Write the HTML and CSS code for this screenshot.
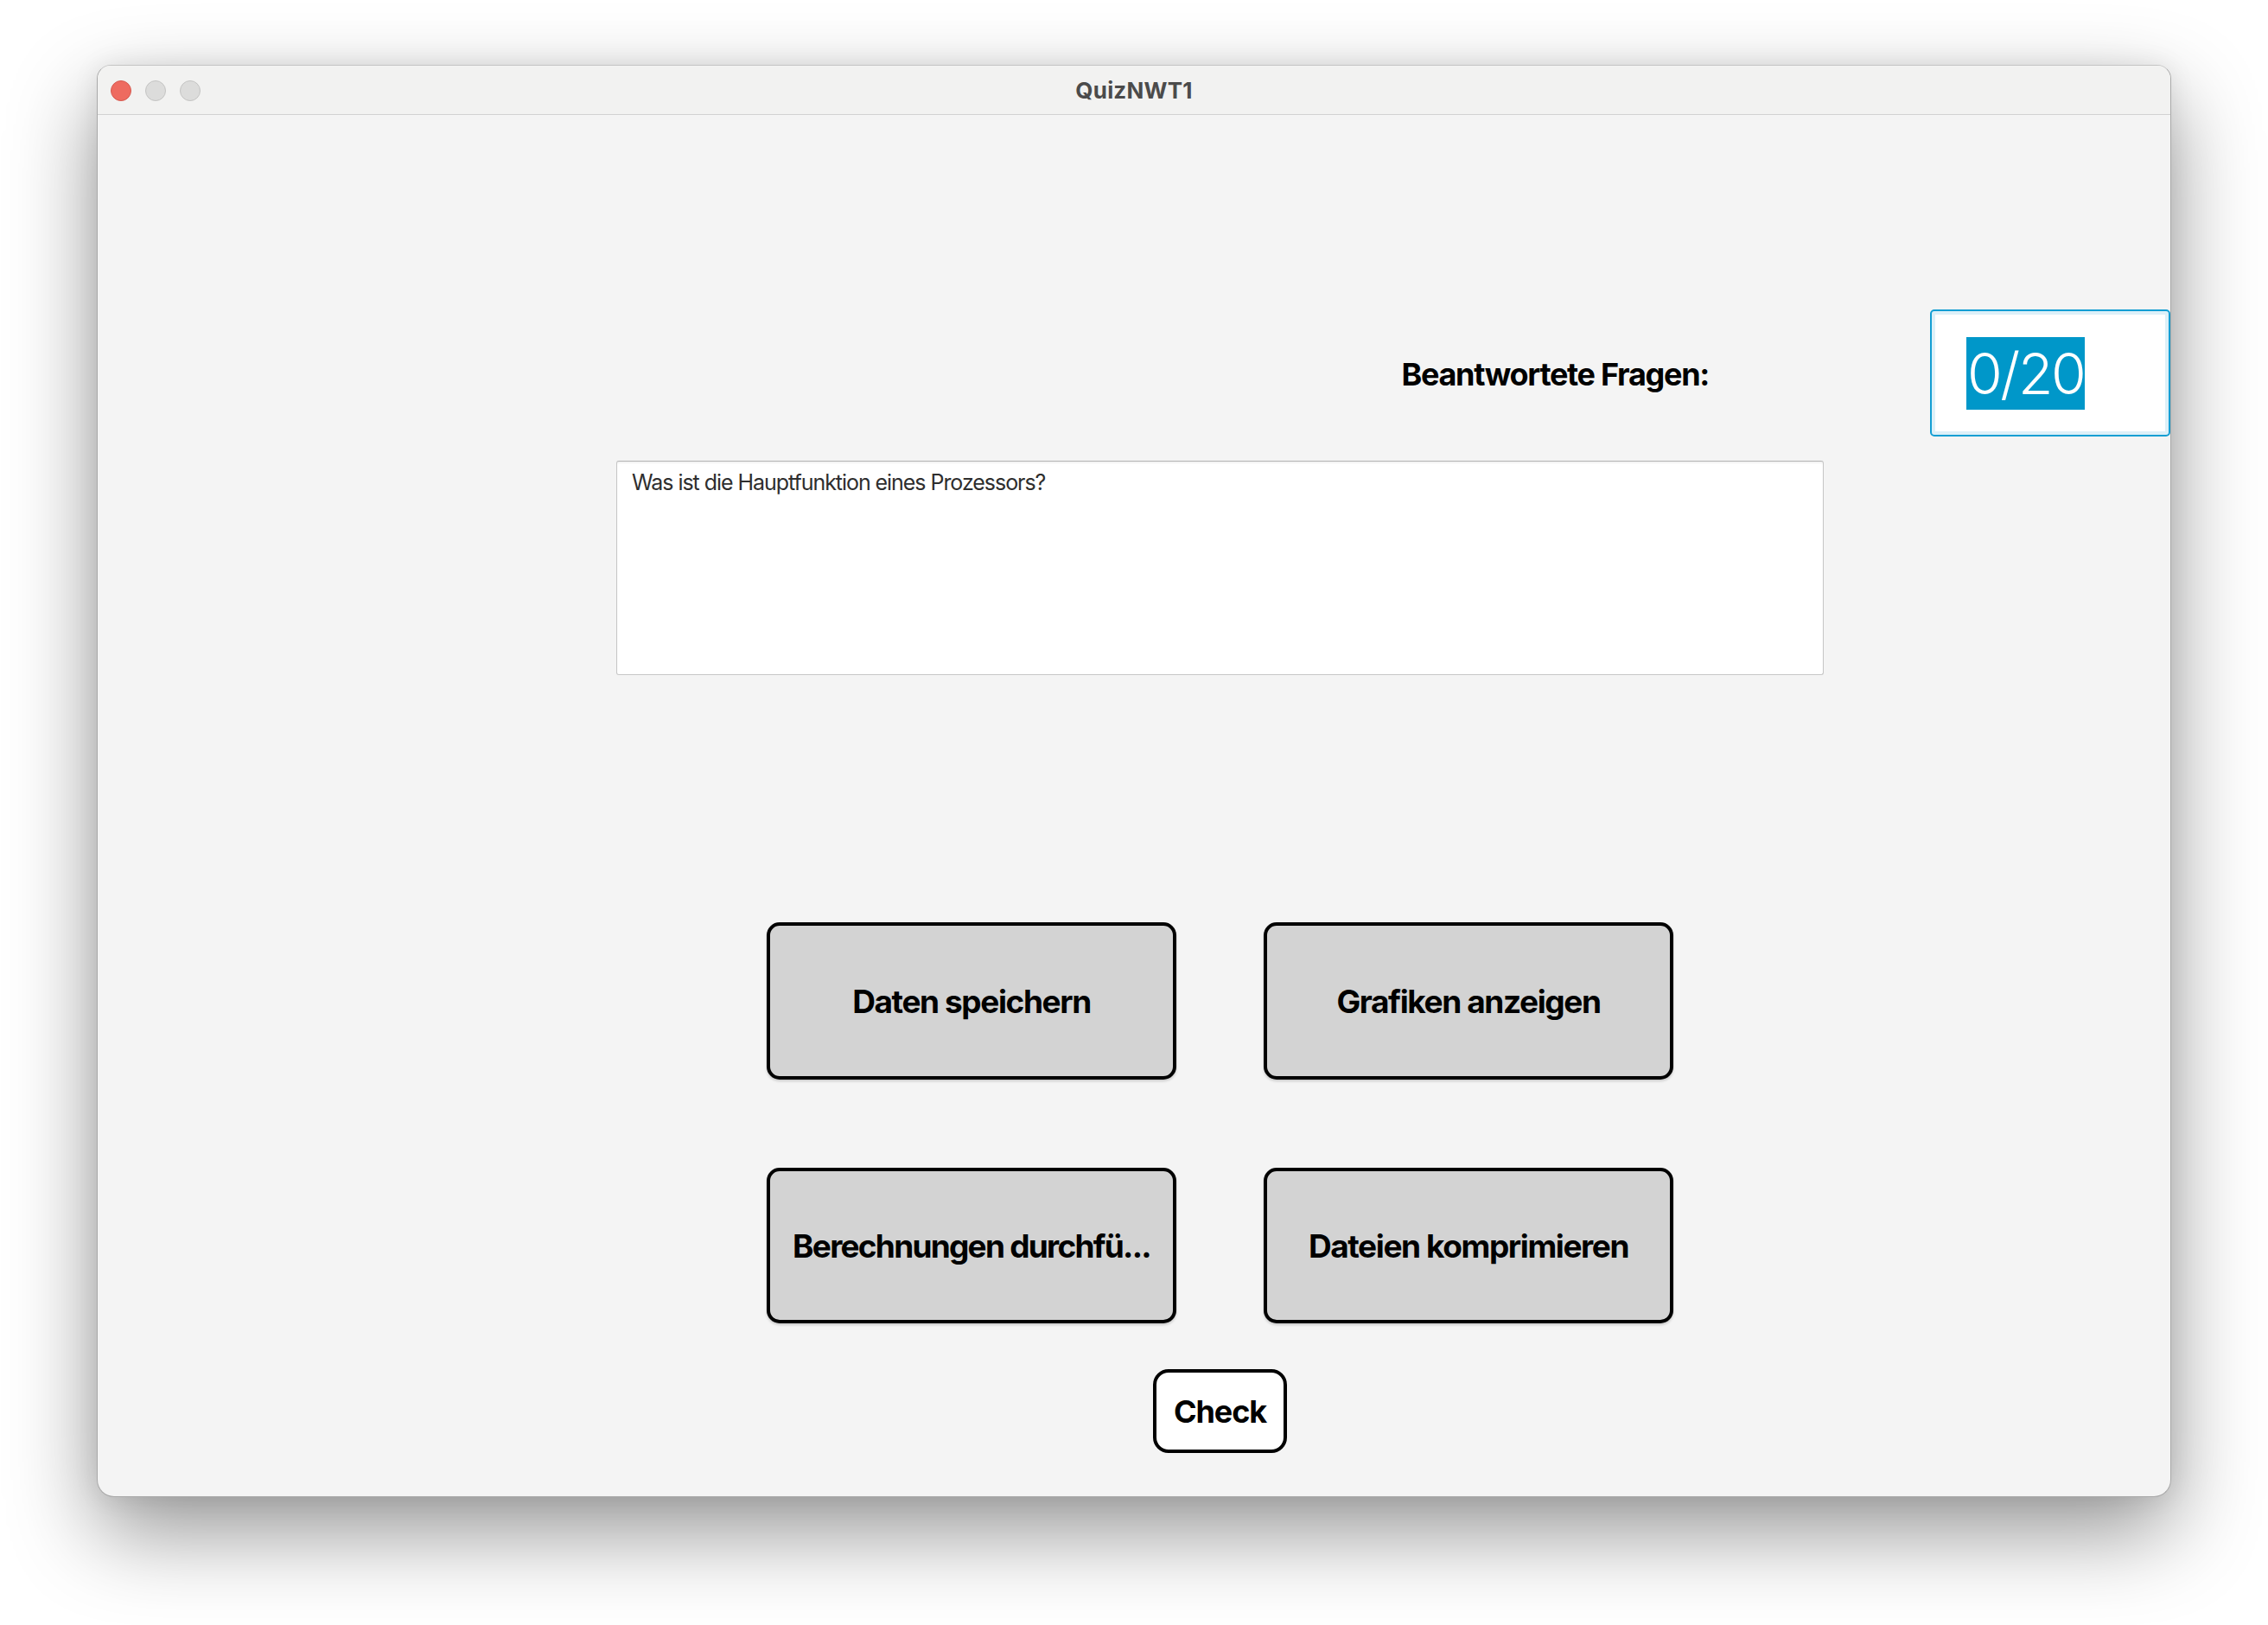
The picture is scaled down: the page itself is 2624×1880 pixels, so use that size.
FILE: index.html
```html
<!DOCTYPE html>
<html lang="de">
<head>
<meta charset="utf-8">
<title>QuizNWT1</title>
<link rel="stylesheet" href="styles.css">
</head>
<body>
<div class="window">
  <div class="titlebar">
    <div class="lights">
      <span class="light red"></span>
      <span class="light gray"></span>
      <span class="light gray"></span>
    </div>
    <div class="title">QuizNWT1</div>
    <div></div>
  </div>
  <div class="content">
    <div class="header-row">
      <div class="label">Beantwortete Fragen:</div>
      <div class="counter"><span class="selection">0/20</span></div>
    </div>
    <div class="stage">
      <div class="question">Was ist die Hauptfunktion eines Prozessors?</div>
      <div class="answers">
        <button class="answer">Daten speichern</button>
        <button class="answer">Grafiken anzeigen</button>
        <button class="answer narrow">Berechnungen durchfü...</button>
        <button class="answer">Dateien komprimieren</button>
      </div>
      <button class="check">Check</button>
    </div>
  </div>
</div>
</body>
</html>
```

FILE: styles.css
```css
html, body {
  margin: 0;
  padding: 0;
  background: #ffffff;
}

body {
  width: 2624px;
  height: 1880px;
  overflow: hidden;
  font-family: Inter, "Noto Sans", sans-serif;
}

.window {
  margin: 75px 0 0 112px;
  width: 2400px;
  height: 1657px;
  box-sizing: border-box;
  border-radius: 16px 16px 20px 20px;
  border: 1px solid #a9a9a9;
  border-top-color: #c4c4c4;
  background: #f4f4f4;
  overflow: hidden;
  box-shadow: 0 40px 100px rgba(0, 0, 0, 0.42), 0 0 30px rgba(0, 0, 0, 0.08);
  display: flex;
  flex-direction: column;
}

.titlebar {
  height: 57px;
  box-sizing: border-box;
  border-bottom: 1px solid #d2d2d2;
  background: #f2f2f1;
  display: grid;
  grid-template-columns: 1fr auto 1fr;
  align-items: center;
}

.lights {
  display: flex;
  gap: 16px;
  padding-left: 15px;
  padding-top: 1px;
}

.light {
  width: 24px;
  height: 24px;
  border-radius: 50%;
  box-sizing: border-box;
}

.light.red {
  background: #ee6b60;
  border: 1px solid #d65a50;
}

.light.gray {
  background: #dcdcdb;
  border: 1px solid #c4c4c3;
}

.title {
  font-size: 26px;
  font-weight: 700;
  color: #4b4b4b;
  letter-spacing: 0.2px;
}

.content {
  flex: 1;
  display: flex;
  flex-direction: column;
}

.header-row {
  margin-top: 225px;
  height: 147px;
  display: flex;
  justify-content: flex-end;
  align-items: center;
  gap: 256px;
}

.label {
  font-size: 36px;
  font-weight: 700;
  color: #000;
  letter-spacing: -1.3px;
  padding-top: 2px;
}

.counter {
  width: 278px;
  height: 147px;
  box-sizing: border-box;
  border: 2px solid #139ed3;
  border-radius: 5px;
  background: #ffffff;
  box-shadow: inset 0 0 0 4px #ddf0f8;
  display: flex;
  align-items: center;
  padding-left: 40px;
}

.selection {
  background: #0097c9;
  color: #ffffff;
  font-size: 66px;
  font-weight: 300;
  line-height: 84px;
  height: 84px;
  padding: 0 1px;
  letter-spacing: -2.4px;
}

.stage {
  margin-top: 28px;
  margin-left: 600px;
  width: 1397px;
  display: flex;
  flex-direction: column;
  align-items: center;
}

.question {
  align-self: stretch;
  height: 248px;
  box-sizing: border-box;
  background: #ffffff;
  border: 1px solid #c6c6c6;
  border-top-color: #b4b4b4;
  border-radius: 3px;
  box-shadow: inset 0 2px 2px rgba(0, 0, 0, 0.05);
  padding: 9px 17px;
  font-size: 25px;
  line-height: 30px;
  color: #2e2e2e;
  letter-spacing: -1.05px;
}

.answers {
  margin-top: 286px;
  display: grid;
  grid-template-columns: 474px 474px;
  grid-template-rows: 182px 180px;
  column-gap: 101px;
  row-gap: 102px;
}

.answer {
  margin: 0;
  box-sizing: border-box;
  border: 4px solid #000;
  border-radius: 15px;
  background: #d3d3d3;
  box-shadow: 0 2px 3px rgba(0, 0, 0, 0.18);
  font-family: Inter, "Noto Sans", sans-serif;
  font-size: 37px;
  font-weight: 700;
  color: #000;
  letter-spacing: -1.4px;
  padding: 0;
}

.answer.narrow {
  letter-spacing: -1.75px;
}

.check {
  margin-top: 53px;
  width: 155px;
  height: 97px;
  box-sizing: border-box;
  border: 4px solid #000;
  border-radius: 18px;
  background: #ffffff;
  font-family: Inter, "Noto Sans", sans-serif;
  font-size: 36px;
  font-weight: 700;
  color: #000;
  letter-spacing: -1.1px;
  padding: 0;
}
```
